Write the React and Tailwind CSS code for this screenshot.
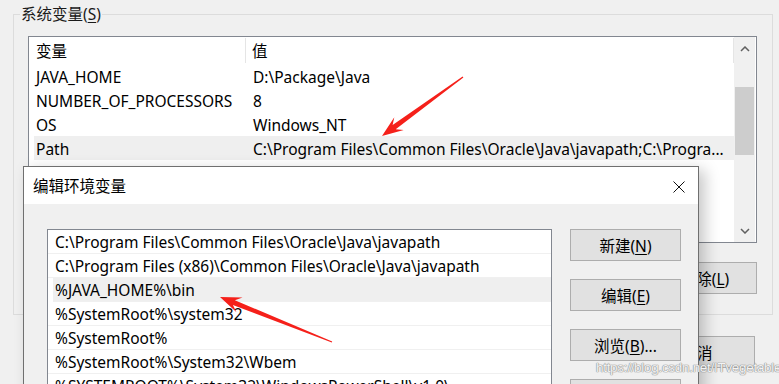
const SYS_VARS = [
  ['JAVA_HOME', 'D:\\Package\\Java'],
  ['NUMBER_OF_PROCESSORS', '8'],
  ['OS', 'Windows_NT'],
  ['Path', 'C:\\Program Files\\Common Files\\Oracle\\Java\\javapath;C:\\Progra...'],
];

const PATH_ITEMS = [
  'C:\\Program Files\\Common Files\\Oracle\\Java\\javapath',
  'C:\\Program Files (x86)\\Common Files\\Oracle\\Java\\javapath',
  '%JAVA_HOME%\\bin',
  '%SystemRoot%\\system32',
  '%SystemRoot%',
  '%SystemRoot%\\System32\\Wbem',
  '%SYSTEMROOT%\\System32\\WindowsPowerShell\\v1.0\\',
];

// tapered red annotation arrow, points computed from tail -> tip
function arrowPoints(tx, ty, hx, hy) {
  const len = Math.hypot(hx - tx, hy - ty);
  const ux = (hx - tx) / len;
  const uy = (hy - ty) / len;
  const nx = -uy;
  const ny = ux;
  const at = (d, w) => [hx - ux * d + nx * w, hy - uy * d + ny * w];
  const pts = [
    [tx + nx * 0.6, ty + ny * 0.6],
    at(15, 2.6),
    at(21, 8),
    [hx, hy],
    at(21, -8),
    at(15, -2.6),
    [tx - nx * 0.6, ty - ny * 0.6],
  ];
  return pts.map(p => p.map(v => v.toFixed(1)).join(',')).join(' ');
}

function Key({ children }) {
  return <span className="underline underline-offset-2">{children}</span>;
}

function WinButton({ children, className = '' }) {
  return (
    <div className={`h-[32px] pt-[3px] bg-[#e1e1e1] border border-[#adadad] flex items-center justify-center text-[#000] ${className}`}>
      {children}
    </div>
  );
}

export default function App() {
  return (
    <div
      className="relative w-[779px] h-[384px] overflow-hidden bg-[#f0f0f0] text-[15.5px] text-black"
      style={{ fontFamily: '"Microsoft YaHei UI", "Noto Sans", "Noto Sans CJK SC", sans-serif' }}
    >
      {/* background window: system variables group */}
      <div className="pl-[13px] pr-[6px] pt-[14px]">
        <div className="border border-[#dcdcdc] pb-[20px]">
          <div className="-mt-[10px] ml-[6px] px-[1px] w-fit bg-[#f0f0f0] leading-[19px] text-[#1a1a1a]">
            系统变量(<Key>S</Key>)
          </div>
          <div className="mt-[12px] ml-[14px] mr-[15px] h-[207px] border border-[#828790] bg-white flex">
            <div className="flex-1 flex flex-col">
              <div className="h-[27px] flex items-center">
                <div className="w-[217px] h-[25px] pl-[7px] pt-[2px] flex items-center border-r border-[#e5e5e5]">变量</div>
                <div className="flex-1 h-[25px] pl-[6px] pt-[2px] flex items-center border-r border-[#e5e5e5]">值</div>
              </div>
              {SYS_VARS.map(([k, v], i) => (
                <div
                  key={k}
                  className={`h-[24px] pt-[3px] ml-[5px] flex items-center ${i === 3 ? 'bg-[#efefef]' : ''}`}
                >
                  <div className="w-[219px] pl-[2px] whitespace-nowrap">{k}</div>
                  <div className="whitespace-nowrap">{v}</div>
                </div>
              ))}
            </div>
            <div className="w-[21px] mr-[1px] bg-[#f0f0f0] flex flex-col items-center">
              <svg width="10" height="6" viewBox="0 0 10 6" className="mt-[9px]">
                <path d="M1 5 L5 1 L9 5" fill="none" stroke="#606060" strokeWidth="1.5" />
              </svg>
              <div className="mt-[35px] w-[19px] h-[68px] bg-[#cdcdcd]" />
              <div className="flex-1" />
              <svg width="10" height="6" viewBox="0 0 10 6" className="mb-[8px]">
                <path d="M1 1 L5 5 L9 1" fill="none" stroke="#606060" strokeWidth="1.5" />
              </svg>
            </div>
          </div>
          <div className="mt-[19px] mr-[15px] flex justify-end gap-[12px]">
            <WinButton className="w-[104px]">新建(<Key>W</Key>)...</WinButton>
            <WinButton className="w-[104px]">编辑(<Key>I</Key>)...</WinButton>
            <WinButton className="w-[104px]">删除(<Key>L</Key>)</WinButton>
          </div>
        </div>
        <div className="mt-[21px] mr-[18px] flex justify-end gap-[12px]">
          <WinButton className="w-[116px]">确定</WinButton>
          <WinButton className="w-[116px]">取消</WinButton>
        </div>
      </div>

      {/* edit environment variable dialog */}
      <div className="absolute left-[23px] top-[166px] w-[676px] h-[240px] border border-[#6f6f6f] bg-[#f0f0f0] shadow-[6px_4px_14px_rgba(0,0,0,0.22)]">
        <div className="h-[37px] pt-[2px] bg-white flex items-center justify-between pl-[9px] pr-[13px]">
          <span>编辑环境变量</span>
          <svg width="12" height="12" viewBox="0 0 12 12">
            <path d="M0.5 0.5 L11.5 11.5 M11.5 0.5 L0.5 11.5" stroke="#111" strokeWidth="1" />
          </svg>
        </div>
        <div className="pt-[25px] pl-[23px] flex gap-[18px]">
          <div className="w-[505px] h-[200px] border border-[#828790] bg-white">
            {PATH_ITEMS.map((p, i) => (
              <div
                key={p}
                className={`h-[24px] pt-[3px] flex items-center border-b border-[#f0f0f0] ${i === 2 ? 'ml-[5px] pl-[2px] bg-[#efefef]' : 'pl-[7px]'}`}
              >
                <span className="whitespace-nowrap">{p}</span>
              </div>
            ))}
          </div>
          <div className="flex flex-col gap-[18px]">
            <WinButton className="w-[111px]">新建(<Key>N</Key>)</WinButton>
            <WinButton className="w-[111px]">编辑(<Key>E</Key>)</WinButton>
            <WinButton className="w-[111px]">浏览(<Key>B</Key>)...</WinButton>
            <WinButton className="w-[111px]">删除(<Key>D</Key>)</WinButton>
          </div>
        </div>
      </div>

      {/* annotation arrows */}
      <svg className="absolute inset-0 pointer-events-none" width="779" height="384">
        <polygon points={arrowPoints(463, 77, 382, 136)} fill="#f5201a" />
        <polygon points={arrowPoints(332, 342, 220, 297)} fill="#f5201a" />
      </svg>

      {/* watermark */}
      <div
        className="absolute left-[596px] top-[358px] text-[13.5px] text-white/90 tracking-[-0.3px] [text-shadow:0_0_1px_#8a8a8a,0_0_1px_#8a8a8a,0_0_1px_#8a8a8a]"
        style={{ fontFamily: '"Liberation Sans", Arial, sans-serif' }}
      >
        https://blog.csdn.net/ITvegetable
      </div>
    </div>
  );
}
